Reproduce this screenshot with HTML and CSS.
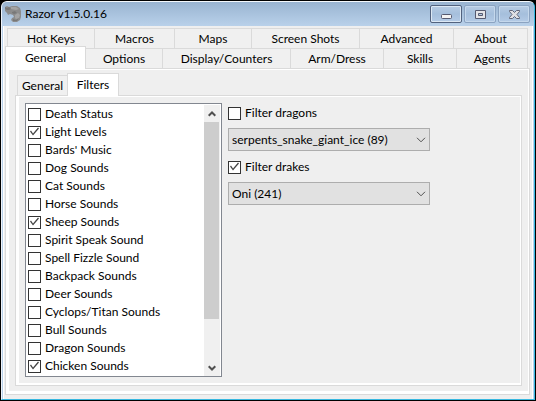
FILE: index.html
```html
<!DOCTYPE html>
<html lang="en">
<head>
<meta charset="utf-8">
<title>Razor v1.5.0.16</title>
<link rel="stylesheet" href="styles.css">
</head>
<body>
<div class="window">
  <header class="titlebar">
    <svg class="logo" viewBox="0 0 17 17" aria-hidden="true">
      <path fill="#8c8c8c" d="M0 1l2-1 2 1 3-1 5 0 3 2 1 3v6l-1 3-3 2-4 0-2-2 1-2 2-1-1-2-3-1-2 1-1-2-2-2z"/>
      <path fill="#787878" d="M0 1l2 1 2-1 2 2-2 1-2 0-2-1zM7 6l3-1 2 2-3 1-2-1zM8 13l3 1 3-2-2 3-4 0z"/>
      <path fill="#a4a4a4" d="M6 1l5 0 3 2-3 1-5-1zM10 9l3-2 2 2-1 3-3 1-1-1z"/>
    </svg>
    <h1 class="title">Razor v1.5.0.16</h1>
    <div class="controls">
      <button class="control control-primary" type="button" aria-label="Minimize">
        <svg viewBox="0 0 13 9"><rect x="1.5" y="4.5" width="10" height="4" rx="1" fill="#f4f4f4" stroke="#565a70"/></svg>
      </button>
      <button class="control" type="button" aria-label="Maximize">
        <svg viewBox="0 0 13 9"><path d="M1.500.5h10v8h-10z" fill="#e4e4e8" stroke="#565a70"/><path d="M4.500 3.500h4v2h-4z" fill="#b4c9e2" stroke="#565a70"/></svg>
      </button>
      <button class="control" type="button" aria-label="Close">
        <svg viewBox="0 0 13 9"><path d="M1.500.5h3l2 2 2-2h3v1l-2.500 3 2.500 3v1h-3l-2-2-2 2h-3v-1l2.500-3-2.500-3z" fill="#e0e0e4" stroke="#626678"/></svg>
      </button>
    </div>
  </header>
  <main class="client">
    <nav class="tabs" role="tablist" aria-label="Sections">
      <div class="tabrow tabrow-back">
        <button class="tab" role="tab">Hot Keys</button>
        <button class="tab" role="tab">Macros</button>
        <button class="tab" role="tab">Maps</button>
        <button class="tab" role="tab">Screen Shots</button>
        <button class="tab" role="tab">Advanced</button>
        <button class="tab" role="tab">About</button>
      </div>
      <div class="tabrow tabrow-front">
        <button class="tab selected" role="tab" aria-selected="true">General</button>
        <button class="tab" role="tab">Options</button>
        <button class="tab" role="tab">Display/Counters</button>
        <button class="tab" role="tab">Arm/Dress</button>
        <button class="tab" role="tab">Skills</button>
        <button class="tab" role="tab">Agents</button>
      </div>
    </nav>
    <section class="page outer">
      <div class="subtabs" role="tablist" aria-label="General">
        <button class="tab" role="tab">General</button>
        <button class="tab selected" role="tab" aria-selected="true">Filters</button>
      </div>
      <section class="page inner">
        <div class="listbox">
          <div class="items">
            <label class="check"><input type="checkbox">Death Status</label>
            <label class="check"><input type="checkbox" checked>Light Levels</label>
            <label class="check"><input type="checkbox">Bards' Music</label>
            <label class="check"><input type="checkbox">Dog Sounds</label>
            <label class="check"><input type="checkbox">Cat Sounds</label>
            <label class="check"><input type="checkbox">Horse Sounds</label>
            <label class="check"><input type="checkbox" checked>Sheep Sounds</label>
            <label class="check"><input type="checkbox">Spirit Speak Sound</label>
            <label class="check"><input type="checkbox">Spell Fizzle Sound</label>
            <label class="check"><input type="checkbox">Backpack Sounds</label>
            <label class="check"><input type="checkbox">Deer Sounds</label>
            <label class="check"><input type="checkbox">Cyclops/Titan Sounds</label>
            <label class="check"><input type="checkbox">Bull Sounds</label>
            <label class="check"><input type="checkbox">Dragon Sounds</label>
            <label class="check"><input type="checkbox" checked>Chicken Sounds</label>
          </div>
          <div class="scrollbar">
            <button class="arrow" type="button" aria-label="Scroll up"><svg viewBox="0 0 8 6"><path d="M.7 4.700L4 1.500l3.300 3.200"/></svg></button>
            <div class="track"><div class="thumb"></div></div>
            <button class="arrow" type="button" aria-label="Scroll down"><svg viewBox="0 0 8 6"><path d="M.7 1.300L4 4.500l3.300-3.200"/></svg></button>
          </div>
        </div>
        <div class="filters">
          <label class="check"><input type="checkbox">Filter dragons</label>
          <div class="combo">
            <select aria-label="Dragon replacement"><option>serpents_snake_giant_ice (89)</option></select>
            <svg viewBox="0 0 10 6"><path d="M1 .8l4 4 4-4"/></svg>
          </div>
          <label class="check"><input type="checkbox" checked>Filter drakes</label>
          <div class="combo">
            <select aria-label="Drake replacement"><option>Oni (241)</option></select>
            <svg viewBox="0 0 10 6"><path d="M1 .8l4 4 4-4"/></svg>
          </div>
        </div>
      </section>
    </section>
  </main>
</div>
</body>
</html>
```

FILE: styles.css
```css
* { box-sizing: border-box; }

body {
  margin: 0;
  min-height: 100vh;
  display: flex;
  background: #000;
  color: #000;
  font: 12px/16px Lato, "Noto Sans", sans-serif;
}

button, select { font: inherit; color: inherit; }

.window {
  flex: 1;
  display: flex;
  flex-direction: column;
  margin: 1px;
  border: 1px solid #38b8e0;
  border-top-color: #f4f8fc;
  border-left-color: #eef3fa;
  border-radius: 6px 6px 0 0;
  background: #b9d1ea;
  overflow: hidden;
}

.titlebar {
  display: flex;
  align-items: center;
  height: 24px;
  padding: 0 4px 0 3px;
  background: linear-gradient(#99b4d1, #b9d1ea);
}

.logo { width: 17px; height: 17px; }

.title {
  flex: 1;
  margin: 0 0 0 3px;
  font: inherit;
}

.controls { display: flex; gap: 2px; }

.control {
  display: flex;
  align-items: center;
  justify-content: center;
  width: 32px;
  height: 18px;
  padding: 0;
  border: 1px solid #8ba3c1;
  border-radius: 2px;
  background: linear-gradient(#b7cce4, #a5bfdc 50%, #b4cbe6);
  box-shadow: inset 0 0 0 1px #c5d8ec;
}

.control-primary { border-color: #52627e; box-shadow: inset 0 0 0 1px #dce8f4; }
.control svg { width: 13px; height: 9px; }

.client {
  flex: 1;
  display: flex;
  flex-direction: column;
  margin: 0 1px 0 1px;
  padding: 2px 2px 4px 1px;
  border: solid #fff;
  border-width: 0 1px 0 1px;
  background: #efefef;
}

.tabs { padding: 0 2px; }

.tabrow {
  display: grid;
  height: 20px;
  border-left: 1px solid #dadada;
}

.tabrow-back { grid-template-columns: 87fr 80fr 77fr 108fr 94fr 74fr; }
.tabrow-front { grid-template-columns: 78fr 77fr 128fr 93fr 73fr 71fr; }

.tab {
  padding: 0;
  border: 1px solid #dadada;
  border-width: 1px 1px 0 0;
  background: #f0f0f0;
  line-height: 18px;
  white-space: nowrap;
}

.tab.selected {
  z-index: 1;
  margin: -2px 0 -1px -3px;
  border-left-width: 1px;
  background: #fff;
}

.page {
  border: 1px solid #dadada;
  background: #efefef;
}

.outer {
  flex: 1;
  display: flex;
  flex-direction: column;
  padding: 4px 7px 8px 6px;
  box-shadow: inset 3px -3px #fff, inset -1px 1px #fff;
}

.subtabs {
  display: flex;
  height: 22px;
  padding: 2px 2px 0 5px;
}

.subtabs .tab { width: 51px; border-left-width: 1px; }
.subtabs .tab.selected { width: 52px; margin-left: -1px; }

.inner {
  flex: 1;
  display: flex;
  gap: 6px;
  margin-left: 3px;
  padding: 7px 8px 8px 9px;
  box-shadow: inset 3px -2px #fff, inset -1px 1px #fff;
}

.listbox {
  display: flex;
  width: 197px;
  padding: 1px 1px 0;
  border: 1px solid #828790;
  background: #fff;
}

.items { flex: 1; padding: 0 1px; }

.check {
  display: flex;
  align-items: center;
  gap: 4px;
  height: 18px;
  white-space: nowrap;
}

.check input {
  appearance: none;
  flex: none;
  width: 13px;
  height: 13px;
  margin: 0;
  border: 1px solid #333;
  background: #fff;
}

.check input:checked::before {
  content: "";
  display: block;
  width: 11px;
  height: 11px;
  background: #444;
  clip-path: polygon(1px 5px, 2px 4px, 4px 7px, 9px 1px, 10px 2px, 4px 9px);
}

.scrollbar {
  display: flex;
  flex-direction: column;
  width: 16px;
  background: #f0f0f0;
}

.arrow {
  display: flex;
  align-items: center;
  justify-content: center;
  height: 17px;
  padding: 0;
  border: 0;
  background: none;
}

.arrow svg { width: 8px; height: 6px; fill: none; stroke: #505050; stroke-width: 2; }
.track { flex: 1; }
.thumb { width: 15px; height: 83%; background: #cdcdcd; }

.filters { flex: 1; padding-top: 1px; }

.combo {
  display: grid;
  align-items: center;
  max-width: 202px;
  margin: 6px 0 7px;
}

.combo select, .combo svg { grid-area: 1 / 1; }

.combo select {
  appearance: none;
  width: 100%;
  height: 23px;
  padding: 0 20px 0 3px;
  border: 1px solid #adadad;
  border-radius: 0;
  background: #e1e1e1;
}

.combo svg {
  justify-self: end;
  width: 10px;
  height: 6px;
  margin-right: 4px;
  fill: none;
  stroke: #505050;
  pointer-events: none;
}
```
